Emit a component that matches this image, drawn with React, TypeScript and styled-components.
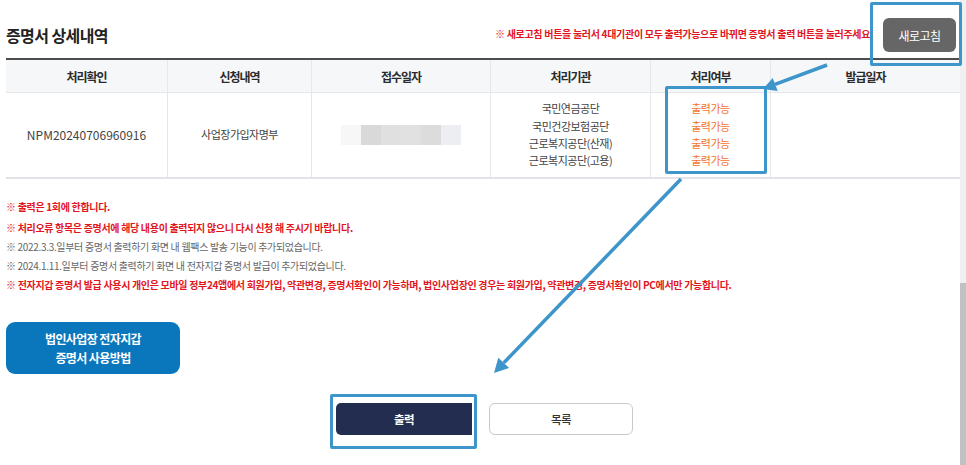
import React from 'react'
import styled, { createGlobalStyle } from 'styled-components'

const COLORS = {
  red: '#e2141c',
  gray: '#666666',
  text: '#3a3a3a',
  line: '#e6e7ea',
  headBg: '#f6f7f9',
  orange: '#f2732f',
  mark: '#3d95c9',
  navy: '#222d4f',
  blue: '#0a77bd',
}

const GlobalStyle = createGlobalStyle`
  html, body {
    margin: 0;
    padding: 0;
    background: #fff;
    overflow: hidden;
  }
  body {
    font-family: "Noto Sans CJK KR", "Noto Sans", sans-serif;
    color: ${COLORS.text};
  }
`

const StyledFrame = styled.div`
  display: flex;
  width: 966px;
  height: 465px;
`

const StyledPage = styled.div`
  position: relative;
  flex: 1;
  padding-left: 6px;
`

const StyledTitleBar = styled.div`
  display: flex;
  align-items: center;
  height: 58px;
  padding-top: 12px;
  box-sizing: border-box;
`

const StyledTitle = styled.h2`
  margin: 0;
  font-size: 16px;
  font-weight: 700;
  letter-spacing: -0.6px;
  color: #222;
`

const StyledTopNote = styled.p`
  margin: 0 0 4px auto;
  width: 375px;
  overflow: hidden;
  white-space: nowrap;
  font-size: 10px;
  font-weight: 700;
  letter-spacing: -0.3px;
  color: ${COLORS.red};
`

const StyledRefresh = styled.button`
  margin: 0 4px 0 13px;
  width: 73px;
  height: 34px;
  border: 0;
  border-radius: 6px;
  background: #666;
  color: #fff;
  font-family: inherit;
  font-size: 12px;
  letter-spacing: -0.5px;
`

const StyledTable = styled.div`
  display: grid;
  grid-template-columns: 161px 144px 179px 160px 120px 190px;
  border-top: 2px solid #4d4d4d;
  border-bottom: 2px solid #e2e3e8;
`

const StyledHeadCell = styled.div`
  display: flex;
  align-items: center;
  justify-content: center;
  height: 32px;
  background: ${COLORS.headBg};
  border-bottom: 1px solid ${COLORS.line};
  border-left: 1px solid ${COLORS.line};
  font-size: 12px;
  font-weight: 700;
  letter-spacing: -1px;
  color: #2b2b2b;
  &:first-child {
    border-left: 0;
  }
`

const StyledCell = styled.div<{ $first?: boolean }>`
  display: flex;
  flex-direction: column;
  align-items: center;
  justify-content: center;
  height: 84px;
  border-left: ${(p) => (p.$first ? '0' : `1px solid ${COLORS.line}`)};
  font-size: 11px;
  line-height: 17.3px;
  letter-spacing: -0.5px;
  color: #444;
`

const StyledCode = styled.span`
  font-size: 12px;
  letter-spacing: 0;
`

const StyledStatus = styled.span`
  color: ${COLORS.orange};
`

const StyledMasked = styled.div`
  display: flex;
  height: 20px;
`

const StyledMaskPart = styled.span<{ $tone: string }>`
  width: 20px;
  background: ${(p) => p.$tone};
`

const StyledNotes = styled.ul`
  margin: 18px 0 0;
  padding: 0;
  list-style: none;
`

const StyledNote = styled.li<{ $alert?: boolean }>`
  font-size: 10px;
  line-height: 19px;
  letter-spacing: -0.32px;
  white-space: nowrap;
  font-weight: ${(p) => (p.$alert ? 700 : 400)};
  color: ${(p) => (p.$alert ? COLORS.red : COLORS.gray)};
  &:first-child {
    margin-bottom: 2px;
  }
`

const StyledGuide = styled.button`
  display: block;
  margin-top: 28px;
  width: 174px;
  height: 52px;
  border: 0;
  border-radius: 9px;
  background: ${COLORS.blue};
  color: #fff;
  font-family: inherit;
  font-size: 12px;
  font-weight: 700;
  line-height: 19px;
  letter-spacing: -0.6px;
`

const StyledActions = styled.div`
  display: flex;
  justify-content: center;
  gap: 17px;
  margin-top: 29px;
  padding-left: 3px;
`

const StyledAction = styled.button<{ $primary?: boolean }>`
  width: ${(p) => (p.$primary ? '136px' : '144px')};
  height: 32px;
  border-radius: ${(p) => (p.$primary ? '5px 0 0 5px' : '6px')};
  border: ${(p) => (p.$primary ? '0' : '1px solid #c9c9c9')};
  background: ${(p) => (p.$primary ? COLORS.navy : '#fff')};
  color: ${(p) => (p.$primary ? '#fff' : '#333')};
  font-family: inherit;
  font-size: 11.5px;
  font-weight: ${(p) => (p.$primary ? 700 : 500)};
  letter-spacing: -0.5px;
`

const StyledMark = styled.div<{ $x: number; $y: number; $w: number; $h: number }>`
  position: absolute;
  left: ${(p) => p.$x}px;
  top: ${(p) => p.$y}px;
  width: ${(p) => p.$w}px;
  height: ${(p) => p.$h}px;
  box-sizing: border-box;
  border: 3px solid ${COLORS.mark};
  border-radius: 2px;
  pointer-events: none;
`

const StyledArrows = styled.svg`
  position: absolute;
  left: 0;
  top: 0;
  overflow: visible;
  pointer-events: none;
`

const StyledScrollTrack = styled.div`
  display: flex;
  flex-direction: column;
  width: 6px;
  background: #f0f0f0;
`

const StyledScrollThumb = styled.div`
  flex: 1;
  margin-top: 283px;
  background: #c1c1c1;
`

const headers = ['처리확인', '신청내역', '접수일자', '처리기관', '처리여부', '발급일자']
const agencies = ['국민연금공단', '국민건강보험공단', '근로복지공단(산재)', '근로복지공단(고용)']
const maskTones = ['#f7f7f7', '#d9d9d9', '#e0e0e0', '#e1e1e1', '#dcdcdc', '#eceef1']

const notes = [
  { alert: true, text: '※ 출력은 1회에 한합니다.' },
  { alert: true, text: '※ 처리오류 항목은 증명서에 해당 내용이 출력되지 않으니 다시 신청 해 주시기 바랍니다.' },
  { alert: false, text: '※ 2022.3.3.일부터 증명서 출력하기 화면 내 웹팩스 발송 기능이 추가되었습니다.' },
  { alert: false, text: '※ 2024.1.11.일부터 증명서 출력하기 화면 내 전자지갑 증명서 발급이 추가되었습니다.' },
  {
    alert: true,
    text: '※ 전자지갑 증명서 발급 사용시 개인은 모바일 정부24앱에서 회원가입, 약관변경, 증명서확인이 가능하며, 법인사업장인 경우는 회원가입, 약관변경, 증명서확인이 PC에서만 가능합니다.',
  },
]

export default function App() {
  return (
    <>
      <GlobalStyle />
      <StyledFrame>
        <StyledPage>
          <StyledTitleBar>
            <StyledTitle>증명서 상세내역</StyledTitle>
            <StyledTopNote>
              ※ 새로고침 버튼을 눌러서 4대기관이 모두 출력가능으로 바뀌면 증명서 출력 버튼을 눌러주세요
            </StyledTopNote>
            <StyledRefresh>새로고침</StyledRefresh>
          </StyledTitleBar>

          <StyledTable>
            {headers.map((h) => (
              <StyledHeadCell key={h}>{h}</StyledHeadCell>
            ))}
            <StyledCell $first>
              <StyledCode>NPM20240706960916</StyledCode>
            </StyledCell>
            <StyledCell>사업장가입자명부</StyledCell>
            <StyledCell>
              <StyledMasked>
                {maskTones.map((t, i) => (
                  <StyledMaskPart key={i} $tone={t} />
                ))}
              </StyledMasked>
            </StyledCell>
            <StyledCell>
              {agencies.map((a) => (
                <span key={a}>{a}</span>
              ))}
            </StyledCell>
            <StyledCell>
              {agencies.map((a) => (
                <StyledStatus key={a}>출력가능</StyledStatus>
              ))}
            </StyledCell>
            <StyledCell />
          </StyledTable>

          <StyledNotes>
            {notes.map((n, i) => (
              <StyledNote key={i} $alert={n.alert}>
                {n.text}
              </StyledNote>
            ))}
          </StyledNotes>

          <StyledGuide>
            법인사업장 전자지갑
            <br />
            증명서 사용방법
          </StyledGuide>

          <StyledActions>
            <StyledAction $primary>출력</StyledAction>
            <StyledAction>목록</StyledAction>
          </StyledActions>

          {/* annotation overlay */}
          <StyledMark $x={870} $y={2} $w={92} $h={64} />
          <StyledMark $x={665} $y={86} $w={102} $h={88} />
          <StyledMark $x={330} $y={394} $w={147} $h={55} />
          <StyledArrows width="966" height="465" viewBox="0 0 966 465">
            <line x1="827" y1="65" x2="775" y2="84.4" stroke={COLORS.mark} strokeWidth="3.5" />
            <polygon points="763,89 777.7,91 772.7,77.9" fill={COLORS.mark} />
            <line x1="681" y1="179" x2="503.7" y2="362.9" stroke={COLORS.mark} strokeWidth="3.5" />
            <polygon points="494,373 509.1,368.1 498.3,357.7" fill={COLORS.mark} />
          </StyledArrows>
        </StyledPage>
        <StyledScrollTrack>
          <StyledScrollThumb />
        </StyledScrollTrack>
      </StyledFrame>
    </>
  )
}
